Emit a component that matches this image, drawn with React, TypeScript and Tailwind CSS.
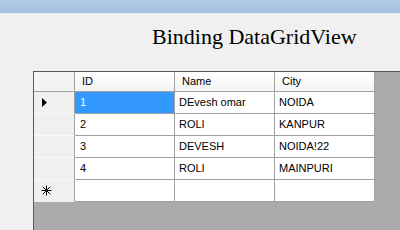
const rows = [
  { id: "1", name: "DEvesh omar", city: "NOIDA" },
  { id: "2", name: "ROLI", city: "KANPUR" },
  { id: "3", name: "DEVESH", city: "NOIDA!22" },
  { id: "4", name: "ROLI", city: "MAINPURI" },
];

const cols = ["ID", "Name", "City"];

export default function App() {
  return (
    <div className="w-[400px] h-[230px] overflow-hidden bg-[#f0f0f0] flex flex-col">
      <div className="h-[13px] shrink-0 bg-gradient-to-b from-[#b2cbe6] to-[#a3bedd]" />
      <div className="h-[58px] shrink-0 pl-[152px] pt-[13px] font-['Liberation_Serif',serif] text-[22px] text-black leading-none">
        Binding DataGridView
      </div>
      <div className="ml-[33px] flex-1 w-[400px] border-l border-t border-[#5a5a5a] bg-[#ababab] font-['Liberation_Sans',Arial,sans-serif] text-[11px] text-black">
        <div className="flex h-[20px]">
          <div className="w-[41px] border-r border-b border-[#a0a0a0] bg-[#f4f4f4]" />
          {cols.map((c) => (
            <div
              key={c}
              className="w-[100px] border-r border-b border-[#a0a0a0] bg-gradient-to-b from-white to-[#f4f4f4] pl-[7px] flex items-center"
            >
              {c}
            </div>
          ))}
        </div>
        {rows.map((r, i) => (
          <div key={r.id} className="flex h-[22px]">
            <div className="w-[41px] border-r border-b border-r-[#a0a0a0] border-b-[#fafafa] bg-[#f0f0f0] flex items-center pl-[8px]">
              {i === 0 && (
                <svg width="5" height="9" viewBox="0 0 5 9">
                  <path d="M0 0 L5 4.5 L0 9 Z" fill="#000" />
                </svg>
              )}
            </div>
            <div
              className={`w-[100px] border-r border-b border-[#a0a0a0] pl-[5px] flex items-center ${
                i === 0 ? "bg-[#3399ff] text-white" : "bg-white"
              }`}
            >
              {r.id}
            </div>
            <div className="w-[100px] border-r border-b border-[#a0a0a0] bg-white pl-[4px] flex items-center">
              {r.name}
            </div>
            <div className="w-[100px] border-r border-b border-[#a0a0a0] bg-white pl-[4px] flex items-center">
              {r.city}
            </div>
          </div>
        ))}
        <div className="flex h-[22px]">
          <div className="w-[41px] border-r border-b border-r-[#a0a0a0] border-b-[#f0f0f0] bg-[#f0f0f0] flex items-center pl-[7px]">
            <svg width="11" height="11" viewBox="0 0 11 11" stroke="#000" strokeWidth="1">
              <path d="M5.5 0.5 V10.5 M0.5 5.5 H10.5 M1.8 1.8 L9.2 9.2 M9.2 1.8 L1.8 9.2" />
            </svg>
          </div>
          <div className="w-[100px] border-r border-b border-[#a0a0a0] bg-white" />
          <div className="w-[100px] border-r border-b border-[#a0a0a0] bg-white" />
          <div className="w-[100px] border-r border-b border-[#a0a0a0] bg-white" />
        </div>
      </div>
    </div>
  );
}
